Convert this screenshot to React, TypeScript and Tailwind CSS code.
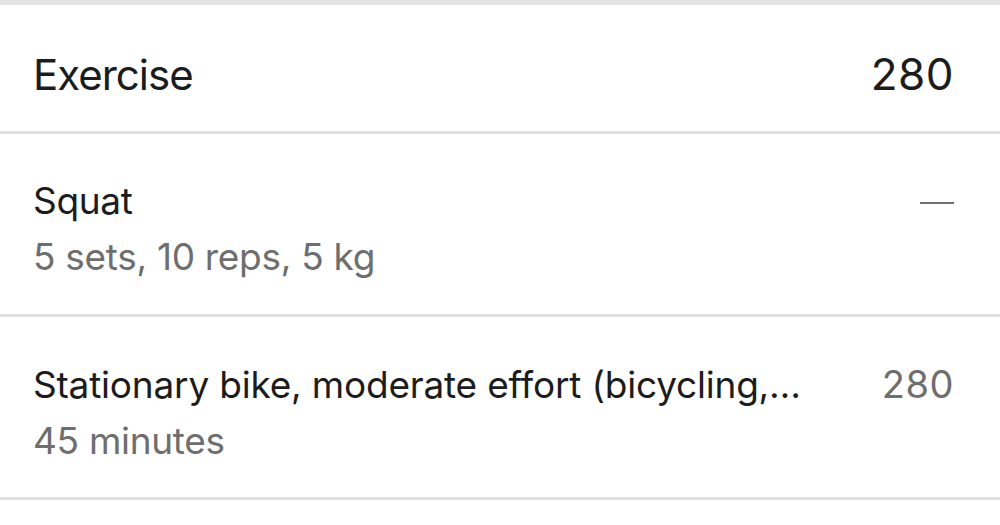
export default function App() {
  const font = { fontFamily: "Inter, 'Noto Sans', sans-serif" };
  return (
    <div className="w-[1000px] h-[525px] bg-white overflow-hidden" style={font}>
      <div className="h-[5px] bg-[#e3e3e3]" />
      <div className="h-[129px] flex items-baseline justify-between pt-[47px] pl-[33px] pr-[46px] border-b-[3px] border-[#e0e0e0]">
        <span className="text-[42px] leading-none text-[#1c1c1c] tracking-[-1px]">Exercise</span>
        <span className="text-[44px] leading-none text-[#1c1c1c] tracking-[0.5px]">280</span>
      </div>
      <div className="h-[183px] flex items-start justify-between pl-[33px] pr-[46px] border-b-[3px] border-[#e0e0e0]">
        <div className="flex flex-col gap-[10px] pt-[44px]">
          <span className="text-[37px] leading-[46px] text-[#1c1c1c] tracking-[-0.3px]">Squat</span>
          <span className="text-[37px] leading-[46px] text-[#6e6e6e] tracking-[-0.3px]">5 sets, 10 reps, 5 kg</span>
        </div>
        <div className="mt-[68px] w-[34px] h-[2px] bg-[#707070]" />
      </div>
      <div className="h-[183px] flex items-baseline justify-between pt-[44px] pl-[33px] pr-[46px] border-b-[3px] border-[#e0e0e0]">
        <div className="flex flex-col gap-[10px] min-w-0">
          <span className="text-[37px] leading-[46px] text-[#1c1c1c] tracking-[-0.2px] whitespace-nowrap">
            Stationary bike, moderate effort (bicycling,…
          </span>
          <span className="text-[37px] leading-[46px] text-[#6e6e6e] tracking-[-0.3px]">45 minutes</span>
        </div>
        <span className="text-[38px] leading-[46px] text-[#6e6e6e] tracking-[0.5px]">280</span>
      </div>
    </div>
  );
}
